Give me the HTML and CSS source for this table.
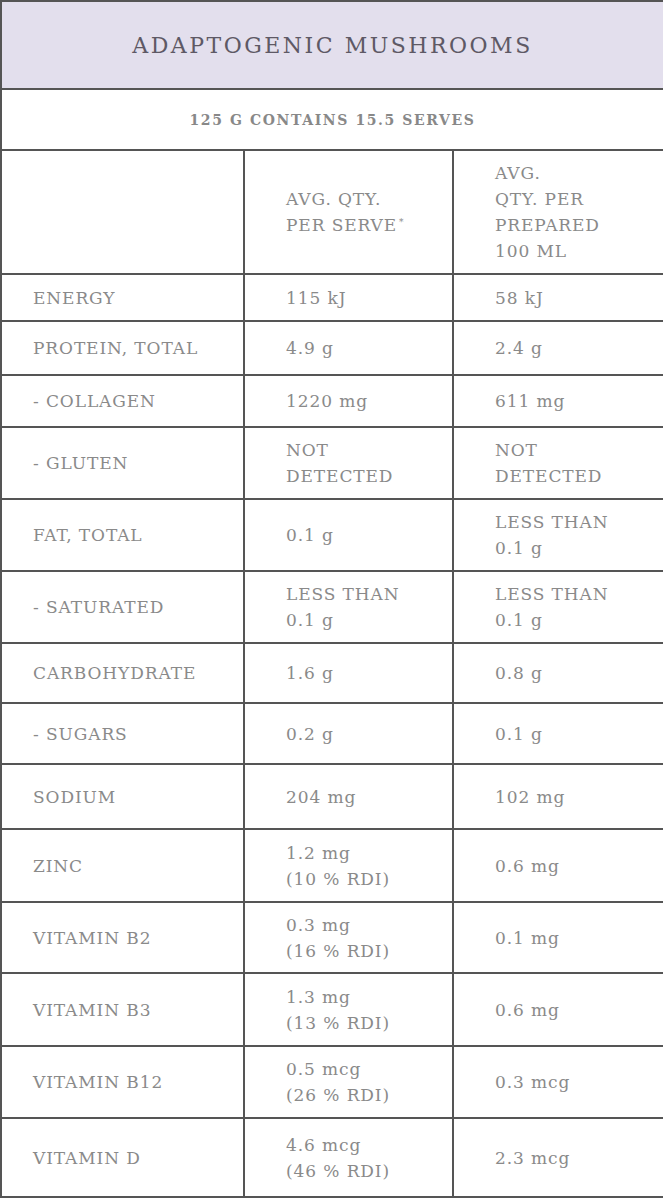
FILE: index.html
```html
<!DOCTYPE html>
<html lang="en">
<head>
<meta charset="utf-8">
<title>Adaptogenic Mushrooms – Nutrition Information</title>
<link rel="stylesheet" href="styles.css">
</head>
<body>
<table class="nutri">
  <colgroup>
    <col class="c-name">
    <col class="c-serve">
    <col class="c-100">
  </colgroup>
  <thead>
    <tr class="r-title"><th colspan="3" class="title">ADAPTOGENIC MUSHROOMS</th></tr>
    <tr class="r-sub"><th colspan="3" class="sub">125 G CONTAINS 15.5 SERVES</th></tr>
    <tr class="r-head">
      <th class="cell name"></th>
      <th class="cell val">AVG. QTY.<br>PER SERVE<sup>*</sup></th>
      <th class="cell val">AVG.<br>QTY. PER<br>PREPARED<br>100 ML</th>
    </tr>
  </thead>
  <tbody>
    <tr class="h47"><td class="cell name">ENERGY</td><td class="cell val">115 kJ</td><td class="cell val">58 kJ</td></tr>
    <tr class="h54"><td class="cell name">PROTEIN, TOTAL</td><td class="cell val">4.9 g</td><td class="cell val">2.4 g</td></tr>
    <tr class="h52"><td class="cell name">- COLLAGEN</td><td class="cell val">1220 mg</td><td class="cell val">611 mg</td></tr>
    <tr class="h72"><td class="cell name">- GLUTEN</td><td class="cell val">NOT<br>DETECTED</td><td class="cell val">NOT<br>DETECTED</td></tr>
    <tr class="h72"><td class="cell name">FAT, TOTAL</td><td class="cell val">0.1 g</td><td class="cell val">LESS THAN<br>0.1 g</td></tr>
    <tr class="h72"><td class="cell name">- SATURATED</td><td class="cell val">LESS THAN<br>0.1 g</td><td class="cell val">LESS THAN<br>0.1 g</td></tr>
    <tr class="h60"><td class="cell name">CARBOHYDRATE</td><td class="cell val">1.6 g</td><td class="cell val">0.8 g</td></tr>
    <tr class="h61"><td class="cell name">- SUGARS</td><td class="cell val">0.2 g</td><td class="cell val">0.1 g</td></tr>
    <tr class="h65"><td class="cell name">SODIUM</td><td class="cell val">204 mg</td><td class="cell val">102 mg</td></tr>
    <tr class="h73"><td class="cell name">ZINC</td><td class="cell val">1.2 mg<br>(10 % RDI)</td><td class="cell val">0.6 mg</td></tr>
    <tr class="h71"><td class="cell name">VITAMIN B2</td><td class="cell val">0.3 mg<br>(16 % RDI)</td><td class="cell val">0.1 mg</td></tr>
    <tr class="h73"><td class="cell name">VITAMIN B3</td><td class="cell val">1.3 mg<br>(13 % RDI)</td><td class="cell val">0.6 mg</td></tr>
    <tr class="h72"><td class="cell name">VITAMIN B12</td><td class="cell val">0.5 mcg<br>(26 % RDI)</td><td class="cell val">0.3 mcg</td></tr>
    <tr class="h79"><td class="cell name">VITAMIN D</td><td class="cell val">4.6 mcg<br>(46 % RDI)</td><td class="cell val">2.3 mcg</td></tr>
  </tbody>
</table>
</body>
</html>
```

FILE: styles.css
```css
html, body {
  margin: 0;
  padding: 0;
  background: #ffffff;
}

.nutri {
  width: 663px;
  border-collapse: collapse;
  table-layout: fixed;
  font-family: "DejaVu Serif", "Liberation Serif", serif;
  color: #8a8a8a;
  border: 2px solid #6e6e6e;
}

.c-name { width: 243px; }
.c-serve { width: 209px; }
.c-100 { width: 211px; }

.nutri th,
.nutri td {
  border: 2px solid #555555;
  padding: 0;
  font-weight: normal;
  text-align: left;
  vertical-align: middle;
}

.nutri .title {
  background: #e3dfed;
  color: #5e5965;
  font-size: 22px;
  letter-spacing: 2.5px;
  text-align: center;
}

.nutri .sub {
  color: #888888;
  font-size: 14px;
  letter-spacing: 1.6px;
  font-weight: bold;
  text-align: center;
}

.cell {
  font-size: 17px;
  line-height: 26px;
  letter-spacing: 0.9px;
}

.nutri .name { padding-left: 31px; }
.nutri .val { padding-left: 41px; }

.cell sup {
  font-size: 9px;
  line-height: 0;
  vertical-align: 6px;
  margin-left: 2px;
}

.r-title { height: 88px; }
.r-sub { height: 61px; }
.r-head { height: 124px; }
.h47 { height: 47px; }
.h52 { height: 52px; }
.h54 { height: 54px; }
.h60 { height: 60px; }
.h61 { height: 61px; }
.h65 { height: 65px; }
.h71 { height: 71px; }
.h72 { height: 72px; }
.h73 { height: 73px; }
.h79 { height: 79px; }
```
